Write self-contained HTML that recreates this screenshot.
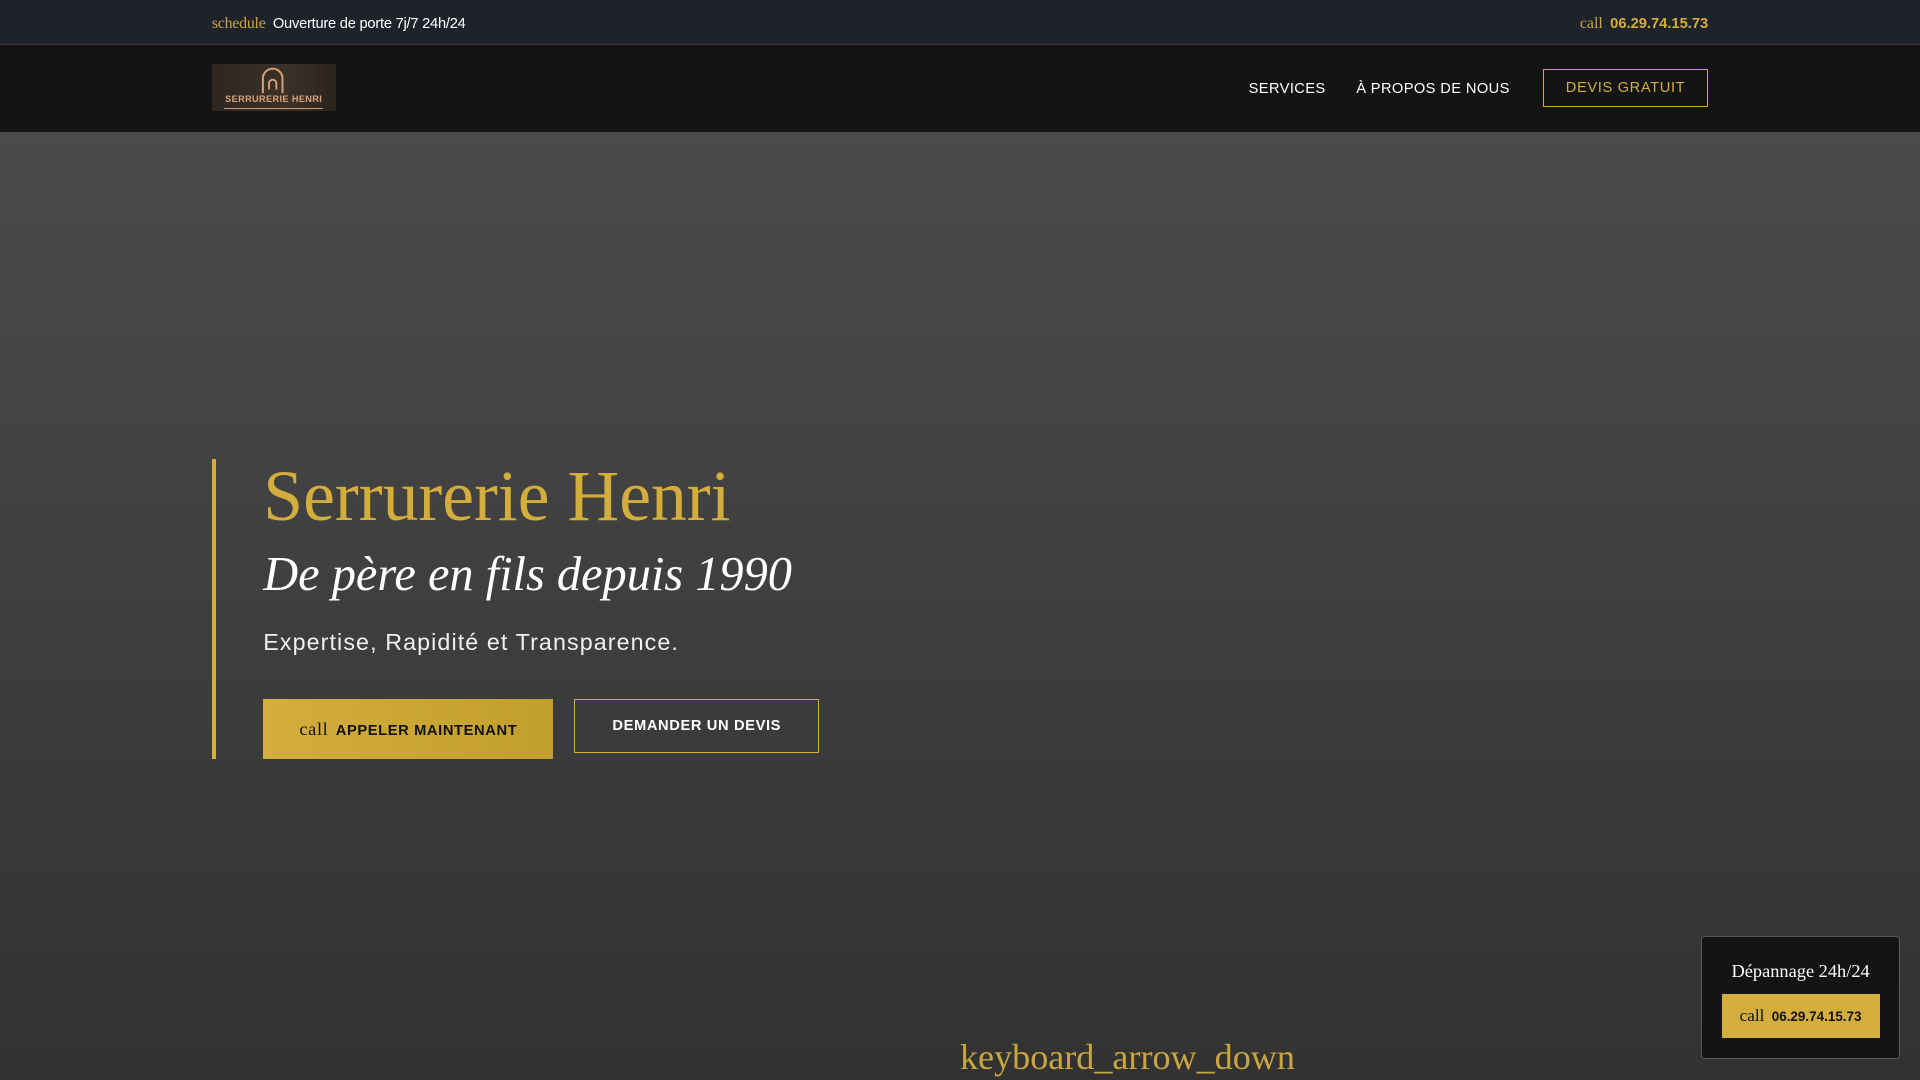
<!DOCTYPE html>
<html><head><meta charset="utf-8"><style>
html{zoom:1.22449}
*{margin:0;padding:0;box-sizing:border-box}
body{width:1568px;height:882px;overflow:hidden;font-family:"Liberation Sans",sans-serif;background:#3a3a3a;position:relative}
.top{height:37px;background:#1e222b;border-bottom:1px solid #3a3630;position:relative;color:#fff;font-size:12px}
.top .l{position:absolute;left:173px;top:12px;letter-spacing:-.2px}
.top .r{position:absolute;right:173px;top:12px;font-weight:bold;color:#d4ae3c}
.ic{font-family:"Liberation Serif",serif;color:#c9a640;font-size:13px;font-weight:normal;margin-right:6px}
nav{height:71px;background:#141414;position:relative}
.logo{position:absolute;left:173px;top:15px;width:101px;height:39px;background:linear-gradient(90deg,#2d2620,#3b3129 60%,#2a241e);text-align:center}
.logo span{position:absolute;left:0;right:0;top:25px;font-size:7.5px;font-weight:bold;color:#d8a47a;letter-spacing:.3px}
.logo i{position:absolute;left:10px;right:10px;top:36px;height:1px;background:#c99c7a}
.menu{position:absolute;right:335px;top:29px;color:#fff;font-size:12px;letter-spacing:.3px}
.menu span{margin-left:25px}
.devis{position:absolute;right:173px;top:19px;width:135px;height:31px;border:1px solid #d4ae3c;color:#d4ae3c;font-size:12px;letter-spacing:.5px;text-align:center;line-height:30px}
.hero{position:absolute;top:108px;left:0;right:0;bottom:0;background:linear-gradient(180deg,#4b4b4b,#323232)}
.bar{position:absolute;left:173px;top:375px;width:3px;height:245px;background:#d4ae3c}
h1{position:absolute;left:215px;top:372px;font-family:"Liberation Serif",serif;font-weight:normal;font-size:58.5px;color:#d4ae3c;white-space:nowrap}
h2{position:absolute;left:215px;top:447px;font-family:"Liberation Serif",serif;font-style:italic;font-weight:normal;font-size:39.5px;color:#fff;white-space:nowrap}
.sub{position:absolute;left:215px;top:514px;font-size:19px;color:#f0f0f0;letter-spacing:.9px}
.b1{position:absolute;left:215px;top:571px;width:237px;height:49px;background:linear-gradient(90deg,#d4ae3c,#c29e2c);color:#111;font-size:12px;font-weight:bold;letter-spacing:.5px;text-align:center;line-height:49px}
.b1 .ic{color:#111;font-size:15px}
.b2{position:absolute;left:469px;top:571px;width:200px;height:44px;border:1px solid #d4ae3c;color:#fff;font-size:12px;font-weight:bold;letter-spacing:.5px;text-align:center;line-height:44px}
.arrow{position:absolute;left:784px;top:846px;font-family:"Liberation Serif",serif;font-size:29.5px;color:#c9a640}
.w{position:absolute;left:1389px;top:764px;width:163px;height:101px;background:#141414;border:1px solid #5a5a5a;border-radius:3px;text-align:center}
.w p{font-family:"Liberation Serif",serif;color:#fff;font-size:15px;margin-top:20px}
.w div{margin:10px auto 0;width:129px;height:36px;background:#d4ae3c;color:#111;font-size:11px;font-weight:bold;line-height:36px}
.w .ic{color:#111;font-size:14px}
</style></head><body>
<div class="top"><div class="l"><span class="ic">schedule</span>Ouverture de porte 7j/7 24h/24</div><div class="r"><span class="ic">call</span>06.29.74.15.73</div></div>
<nav><div class="logo"><svg width="24" height="24" viewBox="0 0 24 24" style="position:absolute;left:38px;top:1px"><path d="M4 23V11a8 8 0 0 1 16 0v12" fill="none" stroke="#d8a47a" stroke-width="1.6"/><path d="M9 20v-5a3 3 0 1 1 6 0v5" fill="none" stroke="#d8a47a" stroke-width="1.5"/></svg><span>SERRURERIE HENRI</span><i></i></div>
<div class="menu"><span>SERVICES</span><span>À PROPOS DE NOUS</span></div><div class="devis">DEVIS GRATUIT</div></nav>
<div class="hero"></div>
<div class="bar"></div>
<h1>Serrurerie Henri</h1>
<h2>De père en fils depuis 1990</h2>
<div class="sub">Expertise, Rapidité et Transparence.</div>
<div class="b1"><span class="ic">call</span>APPELER MAINTENANT</div>
<div class="b2">DEMANDER UN DEVIS</div>
<div class="arrow">keyboard_arrow_down</div>
<div class="w"><p>Dépannage 24h/24</p><div><span class="ic">call</span>06.29.74.15.73</div></div>
</body></html>
